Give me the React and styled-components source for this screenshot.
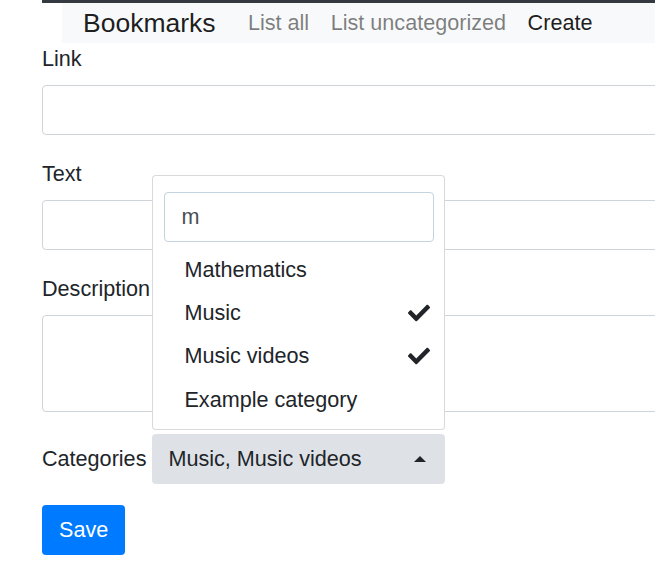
import React, { useState } from 'react'
import styled, { createGlobalStyle } from 'styled-components'
import { FaCheck } from 'react-icons/fa'

const GlobalStyle = createGlobalStyle`
  html, body {
    margin: 0;
    padding: 0;
    background: #fff;
    overflow: hidden;
  }
  body {
    font-family: "Liberation Sans", Arial, sans-serif;
    font-size: 21.6px;
    color: #212529;
  }
`

const Page = styled.div`
  padding-left: 42px;
`

const Column = styled.div`
  width: 700px;
`

const Header = styled.div`
  border-top: 3px solid #343a40;
`

const Nav = styled.nav`
  margin-left: 20px;
  height: 40px;
  background: #f8f9fa;
  display: flex;
  align-items: center;
  padding-left: 21px;
`

const Brand = styled.a`
  font-size: 26.5px;
  color: rgba(0, 0, 0, 0.9);
  margin-right: 21.6px;
  text-decoration: none;
  line-height: 1;
`

const NavLink = styled.a`
  font-size: 21.6px;
  padding: 0 10.8px;
  color: ${props => (props.active ? 'rgba(0,0,0,0.9)' : 'rgba(0,0,0,0.5)')};
  text-decoration: none;
  line-height: 1;
`

const Form = styled.form`
  display: flex;
  flex-direction: column;
`

const Group = styled.div`
  margin-bottom: 22.4px;
  display: flex;
  flex-direction: column;
`

const Label = styled.label`
  line-height: 32.4px;
  margin-bottom: 10px;
`

const Input = styled.input`
  box-sizing: border-box;
  height: 50px;
  width: 100%;
  border: 1px solid #ced4da;
  border-radius: 4px;
  padding: 0 16px;
  font: inherit;
  color: #495057;
  background: #fff;
`

const TextArea = styled.textarea`
  box-sizing: border-box;
  height: 97px;
  width: 100%;
  border: 1px solid #ced4da;
  border-radius: 4px;
  font: inherit;
  resize: none;
`

const InlineGroup = styled.div`
  display: flex;
  align-items: center;
  margin-bottom: 21px;
`

const InlineLabel = styled.label`
  line-height: 32.4px;
  margin-right: 6px;
`

const SelectWrap = styled.div`
  position: relative;
  width: 293px;
`

const SelectButton = styled.button`
  box-sizing: border-box;
  width: 100%;
  height: 50px;
  border: none;
  border-radius: 4px;
  background: #dee2e7;
  color: #212529;
  font: inherit;
  display: flex;
  align-items: center;
  justify-content: space-between;
  padding: 0 19px 0 16px;
`

const Caret = styled.span`
  width: 0;
  height: 0;
  border-left: 6px solid transparent;
  border-right: 6px solid transparent;
  border-bottom: 6px solid #212529;
`

const Menu = styled.div`
  position: absolute;
  left: 0;
  right: 0;
  bottom: calc(100% + 4px);
  box-sizing: border-box;
  height: 255px;
  background: #fff;
  border: 1px solid rgba(0, 0, 0, 0.15);
  border-radius: 4px;
  padding: 16px 10px 10px 11px;
`

const SearchInput = styled.input`
  box-sizing: border-box;
  width: 100%;
  height: 50px;
  border: 1px solid #c3d3e0;
  border-radius: 4px;
  padding: 0 16px;
  font: inherit;
  color: #495057;
  outline: none;
  margin-bottom: 6px;
`

const Item = styled.div`
  display: flex;
  align-items: center;
  justify-content: space-between;
  height: 43.2px;
  margin-left: -11px;
  margin-right: -10px;
  padding: 0 14px 0 31px;
  color: #212529;

  svg {
    width: 22px;
    height: 22px;
  }
`

const SaveButton = styled.button`
  align-self: flex-start;
  height: 50px;
  padding: 0 17px;
  border: none;
  border-radius: 4px;
  background: #007bff;
  color: #fff;
  font: inherit;
`

const categories = [
  { name: 'Mathematics', selected: false },
  { name: 'Music', selected: true },
  { name: 'Music videos', selected: true },
  { name: 'Example category', selected: false },
]

export default function App() {
  const [search, setSearch] = useState('m')

  return (
    <Page>
      <GlobalStyle />
      <Column>
        <Header>
          <Nav>
            <Brand>Bookmarks</Brand>
            <NavLink>List all</NavLink>
            <NavLink>List uncategorized</NavLink>
            <NavLink active>Create</NavLink>
          </Nav>
        </Header>
        <Form onSubmit={e => e.preventDefault()}>
          <Group>
            <Label>Link</Label>
            <Input />
          </Group>
          <Group>
            <Label>Text</Label>
            <Input />
          </Group>
          <Group>
            <Label>Description</Label>
            <TextArea />
          </Group>
          <InlineGroup>
            <InlineLabel>Categories</InlineLabel>
            <SelectWrap>
              <Menu>
                <SearchInput value={search} onChange={e => setSearch(e.target.value)} />
                {categories.map(c => (
                  <Item key={c.name}>
                    <span>{c.name}</span>
                    {c.selected && <FaCheck />}
                  </Item>
                ))}
              </Menu>
              <SelectButton type="button">
                <span>Music, Music videos</span>
                <Caret />
              </SelectButton>
            </SelectWrap>
          </InlineGroup>
          <SaveButton>Save</SaveButton>
        </Form>
      </Column>
    </Page>
  )
}
